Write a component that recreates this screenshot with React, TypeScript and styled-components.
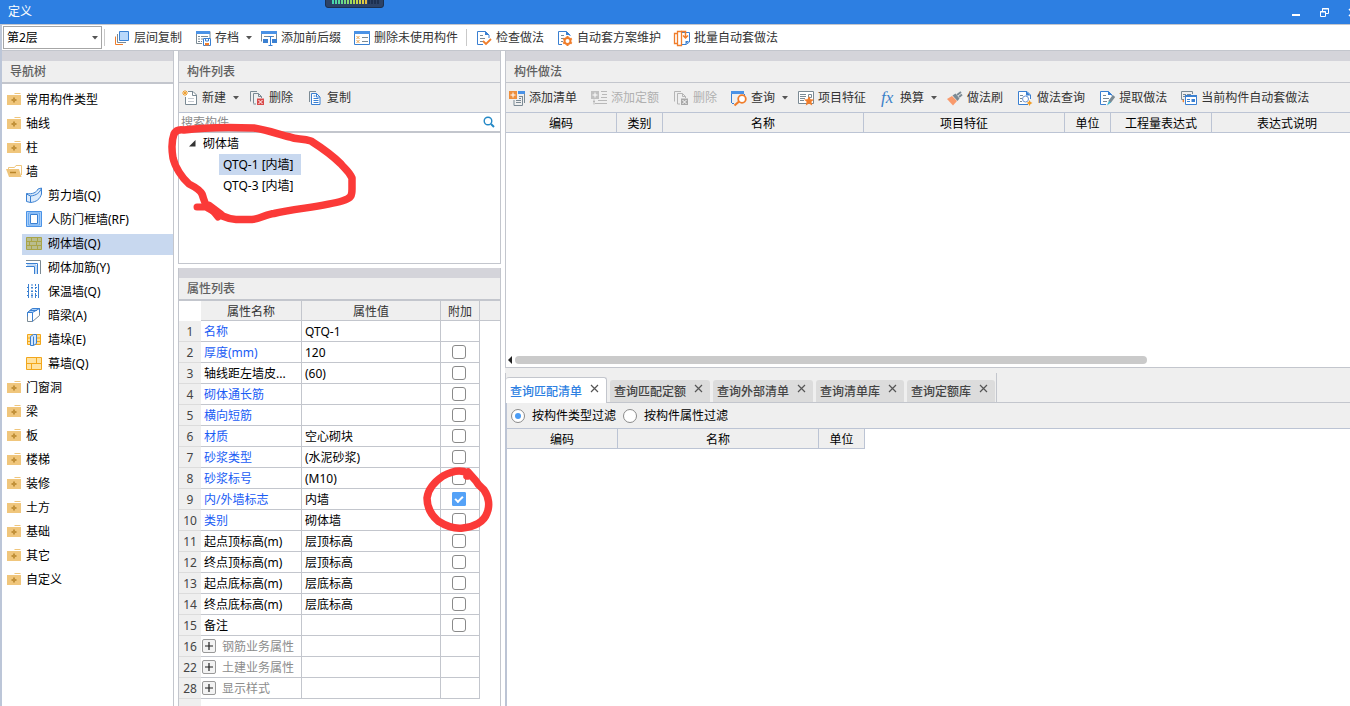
import React, { useState } from "react";
import styled, { createGlobalStyle, css } from "styled-components";

const line = "#c3c6cd";
const gridLine = "#bcc4d4";
const panelGrey = "#efefef";
const accent = "#2d7fe2";

const GlobalStyle = createGlobalStyle`
  *, *::before, *::after { box-sizing: border-box; }
  body { margin: 0; background: #fff; }
  body, button, input, select, table {
    font-family: "Noto Sans", "Noto Sans CJK SC", sans-serif;
    font-size: 12px;
    line-height: 18px;
    color: #000;
  }
  button { border: 0; padding: 0; background: none; }
  ul { margin: 0; padding: 0; list-style: none; }
  svg { display: block; flex: none; overflow: visible; }
`;

/* ---------- frame ---------- */

const Window = styled.div`
  display: flex;
  flex-direction: column;
  height: 100vh;
  overflow: hidden;
`;

const TitleBar = styled.header`
  position: relative;
  display: flex;
  flex: 0 0 24px;
  align-items: center;
  justify-content: space-between;
  padding-left: 8px;
  background: ${accent};
  color: #fff;
  overflow: hidden;
`;

const WindowTitle = styled.h1`
  margin: 0;
  font-size: 12px;
  font-weight: 400;
  line-height: 22px;
`;

const WindowControls = styled.div`
  display: flex;
  margin-right: -16px;
`;

const WindowButton = styled.button`
  display: flex;
  align-items: center;
  justify-content: center;
  width: 28px;
  height: 22px;
`;

const LevelMeter = styled.div`
  position: absolute;
  top: -4px;
  left: 325px;
  width: 59px;
  height: 12px;
  padding: 3px 6px 0;
  border: 1px solid #1b2f4e;
  border-radius: 3px;
  background: #2c4266;
`;

const Body = styled.div`
  display: flex;
  flex: 1;
  flex-direction: column;
  min-height: 0;
  border-top: 1px solid ${line};
  border-left: 2px solid #bcc6d8;
`;

const MainToolbar = styled.nav`
  display: flex;
  flex: 0 0 26px;
  align-items: center;
  border-bottom: 1px solid ${line};
`;

const FloorPicker = styled.label`
  display: flex;
  position: relative;
  align-items: center;
  width: 99px;
  height: 23px;
  margin-left: 1px;
  border: 1px solid #a6a6a6;

  select {
    flex: 1;
    height: 21px;
    padding: 0 3px;
    border: 0;
    background: none;
    appearance: none;
  }
  svg { position: absolute; right: 3px; pointer-events: none; }
`;

const Divider = styled.span`
  width: 1px;
  height: 17px;
  margin: 0 2px;
  background: #c9c9c9;
`;

const ToolButtonBox = styled.button<{ $tight: boolean }>`
  display: flex;
  flex: none;
  align-items: center;
  gap: 4px;
  height: 22px;
  padding: ${(p) => (p.$tight ? "0 6px 0 7px" : "0 11px 0 3px")};
  color: #333;
  white-space: nowrap;

  &:disabled { color: #b0b0b0; }
`;

const CaretSlot = styled.span`
  display: flex;
  margin-right: -4px;
  padding-left: 3px;
`;

const Columns = styled.div`
  display: flex;
  flex: 1;
  gap: 4px;
  min-height: 0;
`;

const Panel = styled.section<{ $height?: number }>`
  position: relative;
  display: flex;
  flex: ${(p) => (p.$height ? `0 0 ${p.$height}px` : "1 1 0")};
  flex-direction: column;
  min-height: 0;
  border-left: 1px solid ${line};
  border-right: 1px solid ${line};
  border-bottom: ${(p) => (p.$height ? `1px solid ${line}` : "0")};
`;

const PanelTitle = styled.h2<{ $thick?: boolean }>`
  flex: none;
  margin: 0;
  padding-left: 8px;
  border-top: 10px solid #d4d4da;
  border-bottom: ${(p) => (p.$thick ? 2 : 1)}px solid ${line};
  background: ${panelGrey};
  color: #606060;
  font-size: 12px;
  font-weight: 500;
  line-height: 21px;
`;

const PanelToolbar = styled.div`
  display: flex;
  flex: 0 0 30px;
  align-items: center;
  border-bottom: 1px solid ${gridLine};
  background: ${panelGrey};
  overflow: hidden;
`;

/* ---------- navigation ---------- */

const NavColumn = styled.aside`
  display: flex;
  flex: 0 0 172px;
  flex-direction: column;
  border-right: 1px solid ${line};
`;

const NavList = styled.ul`
  padding-top: 4px;
`;

const NavItem = styled.li<{ $child?: boolean }>`
  display: flex;
  align-items: center;
  height: 24px;
  padding-left: ${(p) => (p.$child ? 20 : 4)}px;
`;

const NavButton = styled.button<{ $child?: boolean; $selected?: boolean }>`
  display: flex;
  flex: 1;
  align-items: center;
  gap: ${(p) => (p.$child ? 6 : 4)}px;
  height: 21px;
  padding-left: ${(p) => (p.$child ? 4 : 0)}px;
  background: ${(p) => (p.$selected ? "#c8d8ef" : "transparent")};
  text-align: left;

  svg { margin-bottom: 2px; }
`;

/* ---------- middle column ---------- */

const MiddleColumn = styled.div`
  display: flex;
  flex: 0 0 323px;
  flex-direction: column;
  gap: 4px;
`;

const SearchBox = styled.label`
  display: flex;
  flex: 0 0 20px;
  align-items: center;
  padding-right: 5px;
  border-bottom: 2px solid ${line};

  input {
    flex: 1;
    height: 18px;
    padding: 2px 2px 0;
    border: 0;
    outline: 0;
    background: none;
  }
  input::placeholder { color: #8a8a8a; }
`;

const TreeRow = styled.li<{ $leaf?: boolean }>`
  display: flex;
  align-items: center;
  gap: 7px;
  height: 21px;
  padding-left: ${(p) => (p.$leaf ? 40 : 10)}px;
`;

const TreeButton = styled.button<{ $selected?: boolean; $leaf?: boolean }>`
  height: 21px;
  padding: ${(p) => (p.$leaf ? "0 7px 0 4px" : "0")};
  background: ${(p) => (p.$selected ? "#c8d8ef" : "transparent")};
`;

const PropTable = styled.table`
  width: 100%;
  table-layout: fixed;
  border-spacing: 0;

  th, td {
    height: 21px;
    padding: 2px 3px 0;
    border-right: 1px solid ${line};
    border-bottom: 1px solid ${line};
    line-height: 18px;
    text-align: left;
    white-space: nowrap;
    overflow: hidden;
    text-overflow: ellipsis;
  }
  thead th {
    height: 20px;
    background: ${panelGrey};
    color: #333;
    font-weight: 400;
    line-height: 17px;
    text-align: center;
  }
  thead th:first-child { border: 0; background: #fff; }
  tbody th {
    padding: 2px 0 0;
    border-right: 0;
    border-bottom-color: #dcdcdc;
    background: ${panelGrey};
    color: #444;
    font-weight: 400;
    text-align: center;
  }
  th:last-child, td:last-child { border-right: 0; }
  td:last-child { border-bottom: 0; }
`;

const Gutter = styled.div`
  flex: 1;
  width: 22px;
  background: ${panelGrey};
`;

const PropName = styled.span<{ $tone: Tone }>`
  color: ${(p) => ({ link: "#1a5cf5", plain: "#000", group: "#8c8c8c" })[p.$tone]};
`;

const GroupCell = styled.div`
  display: flex;
  align-items: center;
  gap: 6px;
  margin-left: -2px;
`;

const ExpandButton = styled.button`
  display: flex;
  align-items: center;
  justify-content: center;
  width: 14px;
  height: 14px;
  margin-bottom: 2px;
  border: 1px solid #999;
  border-radius: 2px;
  background: #f3f3f3;
`;

const CheckCell = styled.div`
  display: flex;
  justify-content: center;
  padding: 0 2px 2px 0;
`;

const CheckBox = styled.input`
  display: flex;
  align-items: center;
  justify-content: center;
  width: 14px;
  height: 14px;
  margin: 0;
  border: 1px solid #8a8a8a;
  border-radius: 3px;
  background: #fff;
  appearance: none;

  &:checked { border-color: #55a2f7; border-radius: 1px; background: #55a2f7; }
  &:checked::after {
    content: "";
    width: 8px;
    height: 5px;
    margin-bottom: 2px;
    border-bottom: 2px solid #fff;
    border-left: 2px solid #fff;
    transform: rotate(-45deg);
  }
`;

/* ---------- right column ---------- */

const RightColumn = styled.main`
  display: flex;
  flex: 1;
  flex-direction: column;
  min-width: 0;
`;

const PracticePanel = styled(Panel)`
  border-right: 0;
`;

const TableArea = styled.div`
  flex: 1;
  overflow: hidden;
`;

const HeaderTable = styled.table`
  table-layout: fixed;
  border-spacing: 0;

  th {
    height: 20px;
    padding: 2px 0 0;
    border-right: 1px solid ${gridLine};
    border-bottom: 1px solid ${gridLine};
    background: ${panelGrey};
    font-weight: 400;
    line-height: 17px;
  }
`;

const ScrollTrack = styled.div`
  display: flex;
  flex: 0 0 14px;
  align-items: center;
  gap: 3px;
  padding: 0 0 1px 2px;
`;

const ScrollThumb = styled.div`
  flex: 0 0 75%;
  height: 8px;
  border-radius: 4px;
  background: #cacaca;
`;

const QueryPanel = styled.section`
  display: flex;
  flex: 1;
  flex-direction: column;
  min-height: 0;
`;

const TabStrip = styled.div`
  display: flex;
  flex: 0 0 35px;
  padding-top: 5px;
  border-bottom: 1px solid ${line};
  background: ${panelGrey};
`;

const Tabs = styled.div`
  display: flex;
  align-items: flex-end;
  gap: 3px;
  padding-right: 1px;
  border-left: 1px solid ${line};
  border-right: 1px solid ${line};
`;

const Tab = styled.div<{ $active: boolean }>`
  display: flex;
  align-items: flex-start;
  gap: 8px;
  height: 22px;
  padding: 0 7px 0 4px;
  border-radius: 3px 3px 0 0;
  background: #dcdcdc;

  ${(p) =>
    p.$active &&
    css`
      height: 26px;
      margin-bottom: -1px;
      padding: 2px 7px 0 4px;
      border: 1px solid ${line};
      border-left: 0;
      border-bottom: 0;
      background: #fff;
    `}
`;

const TabLabel = styled.button<{ $active: boolean }>`
  height: 22px;
  padding-top: 2px;
  color: ${(p) => (p.$active ? accent : "#444")};
  font-weight: 500;
`;

const TabClose = styled.button`
  display: flex;
  align-items: center;
  height: 16px;
`;

const QueryBody = styled.div`
  flex: 1;
  border-left: 2px solid ${gridLine};
  background: #fff;
`;

const FilterBar = styled.div`
  display: flex;
  align-items: center;
  gap: 7px;
  height: 26px;
  padding-left: 4px;
  border-bottom: 1px solid ${gridLine};
  background: ${panelGrey};

  label { display: flex; align-items: center; gap: 7px; }
`;

const Radio = styled.input`
  display: flex;
  align-items: center;
  justify-content: center;
  width: 14px;
  height: 14px;
  margin: 0;
  border: 1px solid #8a8a8a;
  border-radius: 50%;
  background: #fff;
  appearance: none;

  &:checked::after {
    content: "";
    width: 6px;
    height: 6px;
    border-radius: 50%;
    background: #4a9cf5;
  }
`;

const Marker = styled.svg<{ $left: number; $top: number }>`
  position: absolute;
  left: ${(p) => p.$left}px;
  top: ${(p) => p.$top}px;
  z-index: 2;
  pointer-events: none;
`;

/* ---------- icons ---------- */

const B = "#3a80d2";
const G = "#7b8a94";
const O = "#f07d2b";

const icons: Record<string, React.ReactNode> = {
  layers: (
    <>
      <path d="M5.5 1.500h9v9h-9z" fill="#b9d8fb" stroke={B} />
      <path d="M3.500 4v8.500H12" stroke={G} />
      <path d="M1.500 6.500v8H9" stroke={O} />
    </>
  ),
  archive: (
    <>
      <path d="M15 8V1.500H1.500v12H7" stroke={G} />
      <path d="M1 1h14v3H1z" fill="#4a92e6" />
      <path d="M3 6.500h2m1 0h7M3 9h2m1 0h2M3 11.500h2m1 0h1" stroke={G} />
      <path d="M8.500 8.500h7v7h-7z" fill="#fff" stroke={B} />
      <path d="M10.500 9v2h3V9" stroke={B} />
      <path d="M10 13h4v2.500h-4z" fill={O} />
    </>
  ),
  affix: (
    <>
      <path d="M.5 11.500v-10h15v10" stroke={G} />
      <path d="M0 1h16v3H0z" fill="#4a92e6" />
      <path d="M3 6.500h10" stroke={G} />
      <path d="M2 9h5v4H2zm9 0h5v4h-5z" fill={B} />
      <path d="M9.500 7v8M7.500 6.500h4m-4 9h4" stroke={B} />
    </>
  ),
  unused: (
    <>
      <path d="M.5 1.500h15v13H.5z" fill="#fff" stroke={B} />
      <path d="M0 1h16v3H0z" fill="#4a92e6" />
      <path d="M2.500 6l3 3m0-3l-3 3m0 1l3 3m0-3l-3 3" stroke="#e9a24d" />
      <path d="M8 7.500h6m-6 4h6" stroke={G} />
    </>
  ),
  check: (
    <>
      <path d="M13 8V5L9.500 1.500h-8v13H7" fill="#fff" stroke={B} />
      <path d="M9 1l4 4H9z" fill={B} />
      <path d="M4 5.500h3m-3 3h5m-5 3h3" stroke={G} />
      <path d="M7 11l3 3 5-5" stroke={O} strokeWidth="1.800" />
    </>
  ),
  scheme: (
    <>
      <path d="M13 6V5L9.500 1.500h-8v13H5" fill="#fff" stroke={B} />
      <path d="M9 1l4 4H9z" fill={B} />
      <path d="M4 5.500h3m-3 3h3m-3 3h2" stroke={G} />
      <circle cx="10.500" cy="11" r="3" stroke={O} strokeWidth="2" />
      <path d="M10.500 6v2m0 6v2M6.200 8.500l1.600 1m5.400 3l1.600 1m0-5l-1.600 1m-5.400 3l-1.600 1" stroke={O} strokeWidth="2" />
    </>
  ),
  batch: (
    <>
      <path d="M8 2.500h7.500V12L12 14.500H8" fill="#fff" stroke={B} />
      <path d="M3.500 3.500h-3v10h3M3.500 1.500h4v14h-4z" fill="#fff" stroke={O} strokeWidth="1.300" />
      <path d="M7 1.500h4.500V8M9 5.500L11.500 8 14 5.500" stroke={O} strokeWidth="1.500" />
      <path d="M15 11l-3.500 3.500V11z" fill={B} />
    </>
  ),
  create: (
    <>
      <path d="M6 1.500h5L14.500 5v9.500h-11V7" fill="#fff" stroke={G} />
      <path d="M10.500 1.500v4h4" stroke={G} />
      <path d="M6 8.500h6m-6 3h6" stroke="#c5cad0" />
      <path d="M3 0v6M0 3h6M1 1l4 4m0-4L1 5" stroke="#f0a030" />
    </>
  ),
  remove: (
    <>
      <path d="M1.500 11.500v-10H8M4.500 13.500v-10h5L12.500 6.500V8M9.500 3.500v3h3M4.500 14H7" stroke={G} />
      <path d="M8 8.500h7v6.500H8z" fill="#d94b4b" />
      <path d="M9.500 10l4 4m0-4l-4 4" stroke="#fff" />
    </>
  ),
  removeOff: (
    <>
      <path d="M1.500 11.500v-10H8M4.500 14v-10.500h5L12.500 6.500V8M9.500 3.500v3h3M4.500 14H7" stroke="#b5b5b5" />
      <path d="M8 8.500h7v6.500H8z" fill="#a9a9a9" />
      <path d="M9.500 10l4 4m0-4l-4 4" stroke="#fff" />
    </>
  ),
  copy: (
    <>
      <path d="M2.500 12V1.500H9" stroke={G} />
      <path d="M4.500 3.500h5l3.500 3.500v7.500H4.500z" fill="#fff" stroke={B} />
      <path d="M9.500 3.500V7H13M6.500 8.500h5m-5 2h5m-5 2h5M6.500 6h2" stroke={B} />
    </>
  ),
  addList: (
    <>
      <path d="M9 1h7v3H9z" fill="#4a92e6" />
      <path d="M15.500 4v9M5 10v5.500h8.500V6M10 6.500h3M10 8.500h2m-5 2h5m-5 2h5" stroke={G} />
      <path d="M0 1h8v8H0z" fill="#ee8e3c" />
      <path d="M4 2.500v5M1.500 5h5" stroke="#fff" />
    </>
  ),
  addQuota: (
    <>
      <path d="M0 1h8v8H0z" fill="#c0c0c0" />
      <path d="M4 2.500v5M1.500 5h5" stroke="#fff" />
      <path d="M10 1.500h6m-5 3h5m-6 3h6m-9 3h9m-12 3h12M2 11.500h2m-1-2v5" stroke="#b8b8b8" />
    </>
  ),
  query: (
    <>
      <path d="M.5 13V2M13.500 4v2M1 13.500h2" stroke={B} />
      <path d="M0 1h13v3H0z" fill="#4a92e6" />
      <circle cx="11" cy="9" r="3.800" fill="#fff" stroke={O} strokeWidth="1.800" />
      <path d="M8 11.500L3.500 15.500" stroke={O} strokeWidth="2.200" />
    </>
  ),
  feature: (
    <>
      <path d="M.5 1.500h15v12H.5z" fill="#fff" stroke={G} />
      <path d="M2 4.500h6m-6 2h6m-6 2h5m-5 2h4M10.500 4.500h3v3h-3z" stroke={G} />
      <path d="M11 6l1.500 3.200 3.500.3-2.600 2.300.8 3.700-3.200-2-3.200 2 .8-3.700L6 9.500l3.500-.3z" fill={O} />
    </>
  ),
  fx: (
    <text x="1" y="13" fill="#3a80c8" fontFamily="Liberation Serif, serif" fontStyle="italic" fontSize="17">
      fx
    </text>
  ),
  brush: (
    <>
      <path d="M0 9l5-3 5 5-4 4.500z" fill="#f99a6c" />
      <path d="M5.500 5.500l3-2 4 5L10.500 11z" fill={G} />
      <path d="M10 5l4-3M12 7l3-2.500" stroke={G} strokeWidth="2" />
    </>
  ),
  practiceQuery: (
    <>
      <path d="M13.500 9V5L10 1.500H1.500v13H11" fill="#fff" stroke={B} />
      <path d="M9 1l4.500 4.500H9z" fill={B} />
      <path d="M3 5.500h3m-3 3h2m-2 3h2" stroke={G} />
      <circle cx="8.500" cy="9" r="3" stroke="#6d94cf" />
      <path d="M12.500 10l1 2 2 1-2 1-1 2-1-2-2-1 2-1z" fill="#f39a1e" />
    </>
  ),
  extract: (
    <>
      <path d="M13 6V5L9.500 1.500h-8v13H7" fill="#fff" stroke={B} />
      <path d="M9 1l4 4H9z" fill={B} />
      <path d="M4 5.500h3m-3 3h6m-6 3h4" stroke={G} />
      <path d="M15 6l-4.500 6" stroke={G} strokeWidth="3" />
      <path d="M10 11l2 1.500L8 15.500z" fill="#35b5cf" />
    </>
  ),
  current: (
    <>
      <path d="M3 9.500H.5v-8h11V4M2 4.500h3m1 0h4M2 6.500h2" stroke={G} />
      <path d="M4.500 5.500h11v9h-11z" fill="#fff" stroke={B} />
      <path d="M4 5h12v2H4zM10.500 9h3.500v3h-3.500z" fill={B} />
      <path d="M6 9.500h3m-3 2h3" stroke={B} />
      <path d="M1 11l2 1.500V9.500z" fill={O} />
    </>
  ),
  folder: (
    <>
      <path d="M1 4h14v10H1z" fill="#f0c67c" />
      <path d="M9 2h5l1 1H8z" fill="#f0c67c" />
      <path d="M8 6.500v5M5.500 9h5" stroke="#c2913a" strokeWidth="2" />
    </>
  ),
  folderOpen: (
    <>
      <path d="M2.500 6V4.500h6l1.500-2h5.500V12" fill="#fff" stroke="#efc57b" />
      <path d="M0 6h13l2.500 8H3z" fill="#efc57b" />
      <path d="M4 9.500h6" stroke="#b98529" strokeWidth="1.500" />
    </>
  ),
  shearWall: (
    <>
      <path d="M.5 6.500c6 1 10-1 11.500-4.500l3.500-1v6c-1.500 5-5 8-11 8.500L.5 14.500z" fill="#dcebfc" stroke={B} />
      <path d="M.5 7l4 2c6-.5 9.500-3.500 11-8M4.500 9v6.500" stroke={B} />
    </>
  ),
  frameWall: (
    <>
      <path d="M.5.5h15v15H.5z" fill="#a9cffa" stroke="#4a92e6" />
      <path d="M4.500 3.500h7v9h-7z" fill="#fff" stroke={B} />
      <path d="M2.500 2h11v12h-11z" stroke="#6aaaf0" />
    </>
  ),
  brickWall: (
    <>
      <path d="M.5 2.500h15v12H.5z" fill="#b9bd8e" stroke="#a9a447" />
      <path d="M0 6.500h16m-16 4h16M5.500 2v4m5 0v4m-7 0v-4m2 8v-4m6 4v-4M11.500 2v4" stroke="#a9a447" />
    </>
  ),
  rebar: (
    <>
      <path d="M0 1.500h14.500V15" stroke={G} />
      <path d="M0 4.500h11.500V15M0 7.500h8.500V15" stroke={B} />
      <path d="M1 6h9v9" stroke="#8bb9ec" />
    </>
  ),
  insulation: (
    <>
      <path d="M2.500 1v14m10-14v14" stroke={B} />
      <path d="M6 1v14m3.500-14v14" stroke={B} strokeDasharray="2 1" />
      <path d="M1 4.500h12m-12 4h12m-12 4h12" stroke={B} strokeDasharray="2 2" />
    </>
  ),
  beam: (
    <>
      <path d="M1.500 5.500l5-4h7v7l-7 6h-5z" fill="#fff" stroke={G} />
      <path d="M1.500 5.500l5-4h7l-7 4zM6.500 5.500v9" fill="#a9cffa" stroke={B} />
      <path d="M1.500 5.500v4M13.500 1.500v4M4 3.500h7" stroke={B} />
    </>
  ),
  buttress: (
    <>
      <path d="M1.500 3.500h13v10h-13z" fill="#ffdf97" stroke="#f2a71b" />
      <path d="M1 7h14M1 10.500h14" stroke="#f2a71b" />
      <path d="M4.500 5.500l3-2h3v9l-3 2h-3z" fill="#d5e7fc" stroke={B} />
      <path d="M7.500 5.500v9" stroke={B} />
    </>
  ),
  curtain: (
    <>
      <path d="M.5 2.500h15v12H.5z" fill="#ffe2a0" stroke="#f2a71b" />
      <path d="M0 8.500h16M10.500 2v6m-5 0v6" stroke="#f2a71b" />
    </>
  ),
};

function Icon({ name }: { name: string }) {
  return (
    <svg width="16" height="16" viewBox="0 0 16 16" fill="none" aria-hidden="true">
      {icons[name]}
    </svg>
  );
}

function Caret() {
  return (
    <svg width="6" height="4" viewBox="0 0 6 4" aria-hidden="true">
      <path d="M0 0h6L3 3.500z" fill="#555" />
    </svg>
  );
}

type Tool = { icon: string; label: string; caret?: boolean; disabled?: boolean };

function ToolButton({ icon, label, caret, disabled, tight }: Tool & { tight?: boolean }) {
  return (
    <ToolButtonBox type="button" disabled={disabled} $tight={!!tight}>
      <Icon name={icon} />
      {label}
      {caret && (
        <CaretSlot>
          <Caret />
        </CaretSlot>
      )}
    </ToolButtonBox>
  );
}

/* ---------- data ---------- */

type Tone = "link" | "plain" | "group";

const fileTools: Tool[] = [
  { icon: "layers", label: "层间复制" },
  { icon: "archive", label: "存档", caret: true },
  { icon: "affix", label: "添加前后缀" },
  { icon: "unused", label: "删除未使用构件" },
];
const practiceTools: Tool[] = [
  { icon: "check", label: "检查做法" },
  { icon: "scheme", label: "自动套方案维护" },
  { icon: "batch", label: "批量自动套做法" },
];
const listTools: Tool[] = [
  { icon: "create", label: "新建", caret: true },
  { icon: "remove", label: "删除" },
  { icon: "copy", label: "复制" },
];
const detailTools: Tool[] = [
  { icon: "addList", label: "添加清单" },
  { icon: "addQuota", label: "添加定额", disabled: true },
  { icon: "removeOff", label: "删除", disabled: true },
  { icon: "query", label: "查询", caret: true },
  { icon: "feature", label: "项目特征" },
  { icon: "fx", label: "换算", caret: true },
  { icon: "brush", label: "做法刷" },
  { icon: "practiceQuery", label: "做法查询" },
  { icon: "extract", label: "提取做法" },
  { icon: "current", label: "当前构件自动套做法" },
];

const navItems: { label: string; icon?: string }[] = [
  { label: "常用构件类型" },
  { label: "轴线" },
  { label: "柱" },
  { label: "墙" },
  { label: "剪力墙(Q)", icon: "shearWall" },
  { label: "人防门框墙(RF)", icon: "frameWall" },
  { label: "砌体墙(Q)", icon: "brickWall" },
  { label: "砌体加筋(Y)", icon: "rebar" },
  { label: "保温墙(Q)", icon: "insulation" },
  { label: "暗梁(A)", icon: "beam" },
  { label: "墙垛(E)", icon: "buttress" },
  { label: "幕墙(Q)", icon: "curtain" },
  { label: "门窗洞" },
  { label: "梁" },
  { label: "板" },
  { label: "楼梯" },
  { label: "装修" },
  { label: "土方" },
  { label: "基础" },
  { label: "其它" },
  { label: "自定义" },
];

const properties: { no: number; name: string; value: string; tone: Tone; check?: boolean }[] = [
  { no: 1, name: "名称", value: "QTQ-1", tone: "link" },
  { no: 2, name: "厚度(mm)", value: "120", tone: "link", check: false },
  { no: 3, name: "轴线距左墙皮...", value: "(60)", tone: "plain", check: false },
  { no: 4, name: "砌体通长筋", value: "", tone: "link", check: false },
  { no: 5, name: "横向短筋", value: "", tone: "link", check: false },
  { no: 6, name: "材质", value: "空心砌块", tone: "link", check: false },
  { no: 7, name: "砂浆类型", value: "(水泥砂浆)", tone: "link", check: false },
  { no: 8, name: "砂浆标号", value: "(M10)", tone: "link", check: false },
  { no: 9, name: "内/外墙标志", value: "内墙", tone: "link", check: true },
  { no: 10, name: "类别", value: "砌体墙", tone: "link", check: false },
  { no: 11, name: "起点顶标高(m)", value: "层顶标高", tone: "plain", check: false },
  { no: 12, name: "终点顶标高(m)", value: "层顶标高", tone: "plain", check: false },
  { no: 13, name: "起点底标高(m)", value: "层底标高", tone: "plain", check: false },
  { no: 14, name: "终点底标高(m)", value: "层底标高", tone: "plain", check: false },
  { no: 15, name: "备注", value: "", tone: "plain", check: false },
  { no: 16, name: "钢筋业务属性", value: "", tone: "group" },
  { no: 22, name: "土建业务属性", value: "", tone: "group" },
  { no: 28, name: "显示样式", value: "", tone: "group" },
];

const practiceColumns: [string, number][] = [
  ["编码", 111],
  ["类别", 46],
  ["名称", 201],
  ["项目特征", 201],
  ["单位", 46],
  ["工程量表达式", 101],
  ["表达式说明", 151],
];
const queryColumns: [string, number][] = [
  ["编码", 111],
  ["名称", 201],
  ["单位", 46],
];
const tabNames = ["查询匹配清单", "查询匹配定额", "查询外部清单", "查询清单库", "查询定额库"];

function ColumnHeads({ columns }: { columns: [string, number][] }) {
  const total = columns.reduce((sum, c) => sum + c[1], 0);
  return (
    <HeaderTable width={total}>
      <colgroup>
        {columns.map(([name, width]) => (
          <col key={name} width={width} />
        ))}
      </colgroup>
      <thead>
        <tr>
          {columns.map(([name]) => (
            <th key={name} scope="col">{name}</th>
          ))}
        </tr>
      </thead>
    </HeaderTable>
  );
}

function Navigation() {
  const [selected, setSelected] = useState("砌体墙(Q)");
  return (
    <NavColumn>
      <PanelTitle $thick>导航树</PanelTitle>
      <NavList>
        {navItems.map(({ label, icon }) => (
          <NavItem key={label} $child={!!icon}>
            <NavButton type="button" $child={!!icon} $selected={selected === label} onClick={() => setSelected(label)}>
              <Icon name={icon ?? (label === "墙" ? "folderOpen" : "folder")} />
              {label}
            </NavButton>
          </NavItem>
        ))}
      </NavList>
    </NavColumn>
  );
}

function ComponentList() {
  const [selected, setSelected] = useState("QTQ-1 [内墙]");
  return (
    <Panel $height={213}>
      <PanelTitle>构件列表</PanelTitle>
      <PanelToolbar>
        {listTools.map((t) => (
          <ToolButton key={t.label} {...t} />
        ))}
      </PanelToolbar>
      <SearchBox>
        <input type="text" placeholder="搜索构件" aria-label="搜索构件" />
        <svg width="12" height="12" viewBox="0 0 12 12" fill="none" aria-hidden="true">
          <circle cx="5" cy="5" r="3.800" stroke="#2488c6" strokeWidth="1.400" />
          <path d="M8 8l3 3" stroke="#2488c6" strokeWidth="2" />
        </svg>
      </SearchBox>
      <ul>
        <TreeRow>
          <svg width="7" height="7" viewBox="0 0 7 7" aria-hidden="true">
            <path d="M6.500 0v6.500H0z" fill="#333" />
          </svg>
          <TreeButton type="button">砌体墙</TreeButton>
        </TreeRow>
        {["QTQ-1 [内墙]", "QTQ-3 [内墙]"].map((name) => (
          <TreeRow key={name} $leaf>
            <TreeButton type="button" $leaf $selected={selected === name} onClick={() => setSelected(name)}>
              {name}
            </TreeButton>
          </TreeRow>
        ))}
      </ul>
      <Marker $left={-11} $top={70} width="192" height="104" viewBox="168 121 192 104" fill="none">
        <path
          d="M174 134C171 142 172 152 173 158C175 167 182 178 189 184C195 187 200 190 202 194C204 199 204 203 208 208C218 214 226 219 236 219.500L252 219.500C260 219 267 214 274 213.500C293 209 326 206 342 201C352 198 352 195 352 189L352 178C349 171 344 168 341 164C333 156 322 148 311 141C302 138 297 140 290 137C278 134 267 130 254 128C230 127 206 127 184 130C179 129 176 130 174 134Z"
          stroke="#fb3a38"
          strokeWidth="7.500"
          strokeLinejoin="round"
        />
        <path d="M197 207h13l8 10-9-12 12 9" stroke="#fb3a38" strokeWidth="7" strokeLinecap="round" strokeLinejoin="round" />
      </Marker>
    </Panel>
  );
}

function PropertyList() {
  return (
    <Panel>
      <PanelTitle $thick>属性列表</PanelTitle>
      <PropTable>
        <colgroup>
          <col width="22" />
          <col width="101" />
          <col width="139" />
          <col width="39" />
          <col />
        </colgroup>
        <thead>
          <tr>
            <th />
            <th scope="col">属性名称</th>
            <th scope="col">属性值</th>
            <th scope="col">附加</th>
            <th />
          </tr>
        </thead>
        <tbody>
          {properties.map(({ no, name, value, tone, check }) => (
            <tr key={no}>
              <th scope="row">{no}</th>
              <td>
                {tone === "group" ? (
                  <GroupCell>
                    <ExpandButton type="button" aria-label={name}>
                      <svg width="8" height="8" viewBox="0 0 8 8" aria-hidden="true">
                        <path d="M4 0v8M0 4h8" stroke="#222" strokeWidth="1.200" />
                      </svg>
                    </ExpandButton>
                    <PropName $tone={tone}>{name}</PropName>
                  </GroupCell>
                ) : (
                  <PropName $tone={tone}>{name}</PropName>
                )}
              </td>
              <td>{value}</td>
              <td>
                {check !== undefined && (
                  <CheckCell>
                    <CheckBox type="checkbox" defaultChecked={check} aria-label={name} />
                  </CheckCell>
                )}
              </td>
              <td />
            </tr>
          ))}
        </tbody>
      </PropTable>
      <Gutter />
      <Marker $left={245} $top={196} width="72" height="72" viewBox="424 464 72 72" fill="none">
        <path
          d="M468 473C460 469 450 472 443 476C434 482 428 490 427 498C427 508 431 515 438 521C446 526 456 529 463 528C474 527 484 522 487 513C490 506 489 497 484 490C481 487 478 485 476 481L468 472L467 476"
          stroke="#fb3a38"
          strokeWidth="7.500"
          strokeLinecap="round"
          strokeLinejoin="round"
        />
      </Marker>
    </Panel>
  );
}

function QueryTabs() {
  const [active, setActive] = useState(tabNames[0]);
  return (
    <QueryPanel>
      <TabStrip>
        <Tabs role="tablist">
          {tabNames.map((name) => (
            <Tab key={name} $active={name === active}>
              <TabLabel
                type="button"
                role="tab"
                aria-selected={name === active}
                $active={name === active}
                onClick={() => setActive(name)}
              >
                {name}
              </TabLabel>
              <TabClose type="button" aria-label={`关闭 ${name}`}>
                <svg width="9" height="9" viewBox="0 0 9 9" aria-hidden="true">
                  <path d="M1 1l7 7m0-7L1 8" stroke="#555" strokeWidth="1.200" />
                </svg>
              </TabClose>
            </Tab>
          ))}
        </Tabs>
      </TabStrip>
      <QueryBody>
        <FilterBar>
          <label>
            <Radio type="radio" name="filter" defaultChecked />
            按构件类型过滤
          </label>
          <label>
            <Radio type="radio" name="filter" />
            按构件属性过滤
          </label>
        </FilterBar>
        <ColumnHeads columns={queryColumns} />
      </QueryBody>
    </QueryPanel>
  );
}

const meterColors = ["#45d6b0", "#4fd7a6", "#5ad89a", "#66d88c", "#76d97e", "#8bd96e", "#9fda60", "#b3d950", "#c6d64a", "#d4d145", "#dccc42", "#e6bb3e"];

export default function App() {
  return (
    <Window>
      <GlobalStyle />
      <TitleBar>
        <WindowTitle>定义</WindowTitle>
        <LevelMeter>
          <svg width="46" height="4" viewBox="0 0 46 4" aria-hidden="true">
            {Array.from({ length: 16 }, (_, i) => (
              <path key={i} d={`M${i * 3 + 1} 0v4`} stroke={meterColors[i] ?? "#1d3050"} strokeWidth="2" />
            ))}
          </svg>
        </LevelMeter>
        <WindowControls>
          <WindowButton type="button" aria-label="最小化">
            <svg width="8" height="9" viewBox="0 0 8 9" aria-hidden="true">
              <path d="M0 7h8" stroke="#fff" strokeWidth="2" />
            </svg>
          </WindowButton>
          <WindowButton type="button" aria-label="还原">
            <svg width="9" height="9" viewBox="0 0 9 9" fill="none" stroke="#fff" aria-hidden="true">
              <path d="M.5 3.500h5v5h-5zM0 4h6M2.500 3V.5h6v5H6M2 1h7" />
            </svg>
          </WindowButton>
          <WindowButton type="button" aria-label="关闭">
            <svg width="9" height="9" viewBox="0 0 9 9" aria-hidden="true">
              <path d="M1 1l7 7m0-7L1 8" stroke="#fff" strokeWidth="1.500" />
            </svg>
          </WindowButton>
        </WindowControls>
      </TitleBar>
      <Body>
        <MainToolbar>
          <FloorPicker>
            <select aria-label="楼层" defaultValue="2">
              <option value="1">首层</option>
              <option value="2">第2层</option>
            </select>
            <Caret />
          </FloorPicker>
          <Divider />
          {fileTools.map((t) => (
            <ToolButton key={t.label} {...t} tight />
          ))}
          <Divider />
          {practiceTools.map((t) => (
            <ToolButton key={t.label} {...t} tight />
          ))}
        </MainToolbar>
        <Columns>
          <Navigation />
          <MiddleColumn>
            <ComponentList />
            <PropertyList />
          </MiddleColumn>
          <RightColumn>
            <PracticePanel $height={317}>
              <PanelTitle>构件做法</PanelTitle>
              <PanelToolbar>
                {detailTools.map((t) => (
                  <ToolButton key={t.label} {...t} />
                ))}
              </PanelToolbar>
              <TableArea>
                <ColumnHeads columns={practiceColumns} />
              </TableArea>
              <ScrollTrack>
                <svg width="4" height="8" viewBox="0 0 4 8" aria-hidden="true">
                  <path d="M4 0v8L0 4z" fill="#222" />
                </svg>
                <ScrollThumb />
              </ScrollTrack>
            </PracticePanel>
            <QueryTabs />
          </RightColumn>
        </Columns>
      </Body>
    </Window>
  );
}
